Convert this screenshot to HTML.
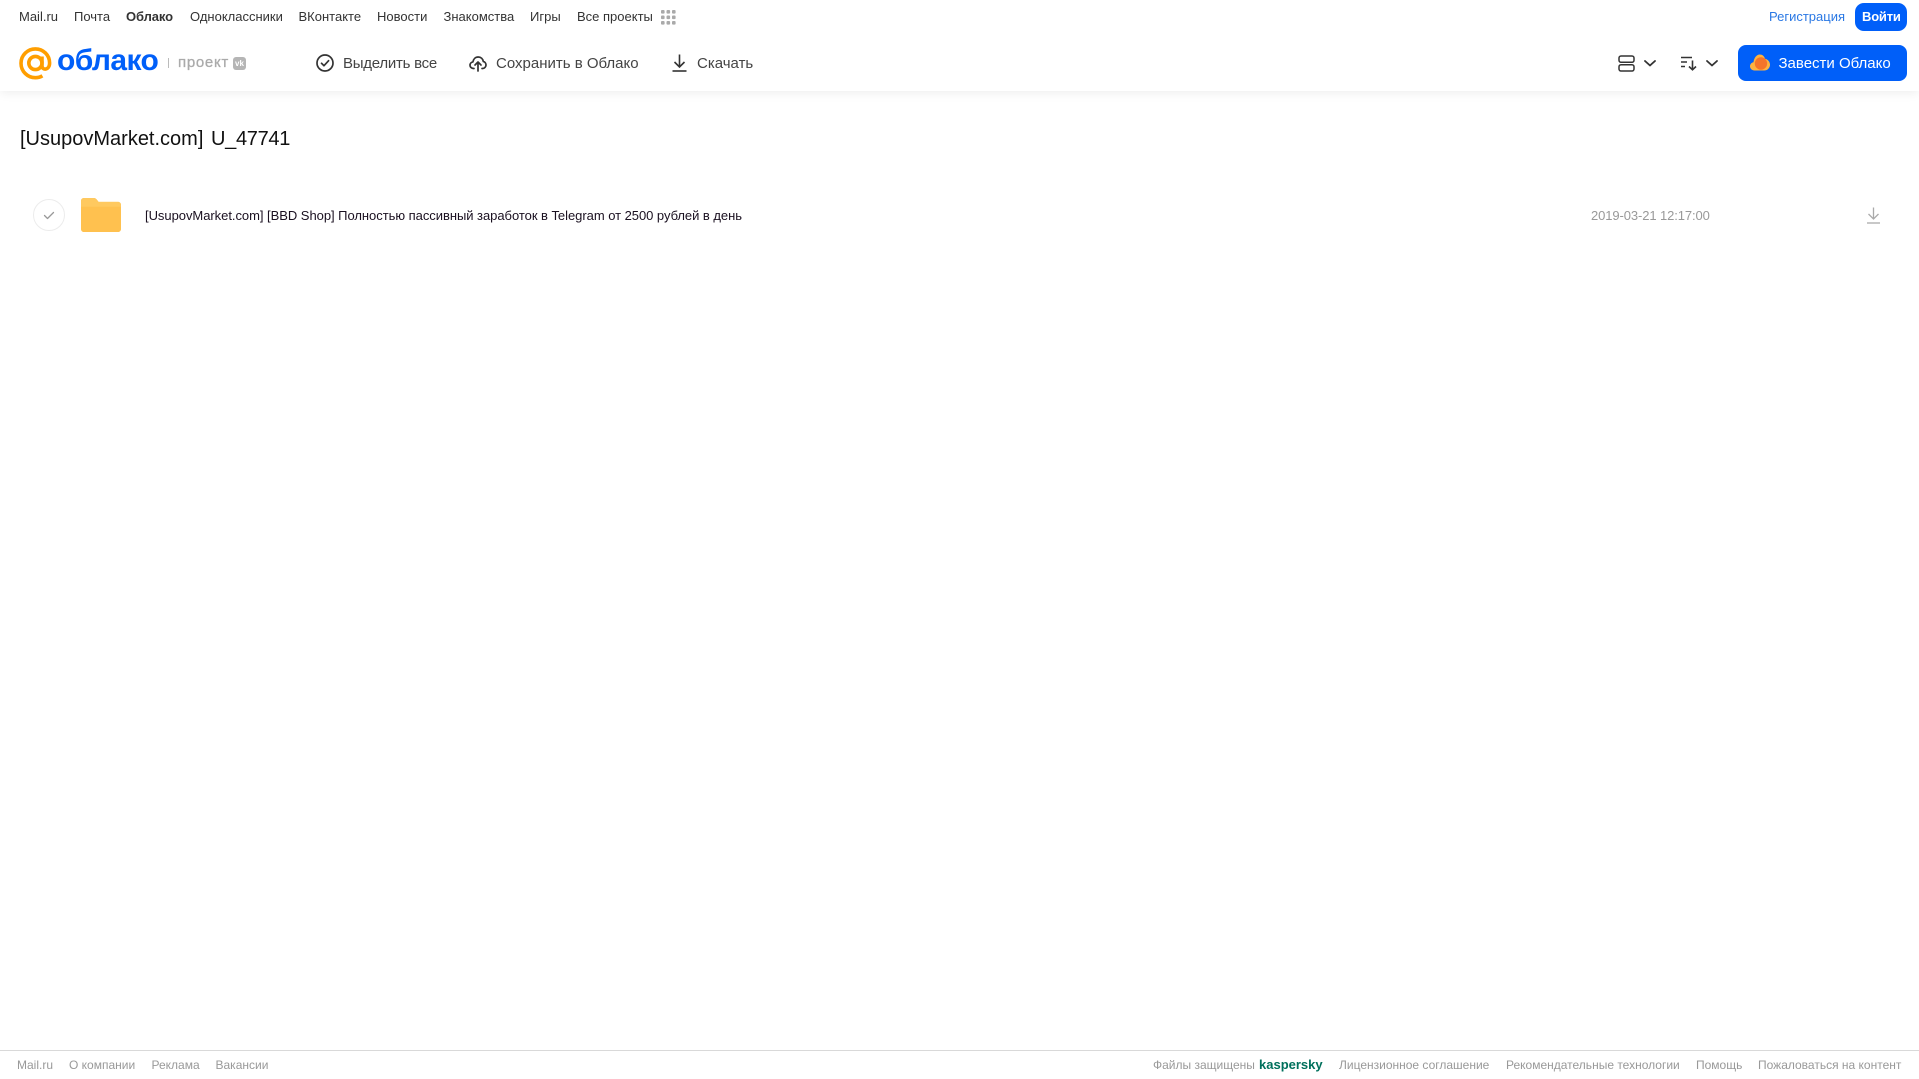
<!DOCTYPE html>
<html lang="ru">
<head>
<meta charset="utf-8">
<title>[UsupovMarket.com] U_47741</title>
<style>
html,body{margin:0;padding:0;background:#fff}
body{width:1919px;height:1079px;position:relative;overflow:hidden;font-family:"Liberation Sans","DejaVu Sans",sans-serif}
.t{position:absolute;white-space:nowrap;line-height:20px}
.n{top:7px;font-size:13px;color:#333}
.b{top:54px;font-size:15px;color:#444}
.f{top:1055px;font-size:12px;color:#999}
svg{position:absolute;overflow:visible}
</style>
</head>
<body>
<div style="position:absolute;left:0;top:0;width:1919px;height:91px;background:#fff;box-shadow:0 2px 10px rgba(0,0,0,.07)"></div>

<span class="t n" style="left:19px">Mail.ru</span>
<span class="t n" style="left:74px">Почта</span>
<span class="t n" style="left:126px;font-weight:bold;letter-spacing:-.1px">Облако</span>
<span class="t n" style="left:190px">Одноклассники</span>
<span class="t n" style="left:298.500px">ВКонтакте</span>
<span class="t n" style="left:377px">Новости</span>
<span class="t n" style="left:443.500px">Знакомства</span>
<span class="t n" style="left:530px">Игры</span>
<span class="t n" style="left:577px">Все проекты</span>
<svg style="left:661px;top:10px" width="15" height="15" fill="#aaa">
<rect x="0" y="0" width="3.6" height="3.6" rx="1"/><rect x="5.5" y="0" width="3.6" height="3.6" rx="1"/><rect x="11" y="0" width="3.6" height="3.6" rx="1"/>
<rect x="0" y="5.5" width="3.6" height="3.6" rx="1"/><rect x="5.5" y="5.5" width="3.6" height="3.6" rx="1"/><rect x="11" y="5.5" width="3.6" height="3.6" rx="1"/>
<rect x="0" y="11" width="3.6" height="3.6" rx="1"/><rect x="5.5" y="11" width="3.6" height="3.6" rx="1"/><rect x="11" y="11" width="3.6" height="3.6" rx="1"/>
</svg>

<span class="t n" style="left:1769px;color:#2a78e4">Регистрация</span>
<div style="position:absolute;left:1855px;top:3px;width:52px;height:28px;background:#005ff9;border-radius:9px"></div>
<span class="t n" style="left:1862px;color:#fff;font-weight:bold;letter-spacing:-.2px">Войти</span>

<!-- Logo -->
<svg style="left:19px;top:47px" width="33" height="33" viewBox="0 0 33 33" fill="none" stroke="#ff9e00" stroke-width="3.6">
<circle cx="16.4" cy="16" r="6.6"/>
<path d="M23 9.5v9.2c0 5.2 7.6 4.6 7.6-2.7C30.600 8 24.200 1.900 16.400 1.900 8.600 1.900 2 8.200 2 16.200 2 24.500 8.600 30.700 16.400 30.700c2.700 0 5-.7 7-1.900"/>
</svg>
<span class="t" style="left:57px;top:45px;font-size:30px;line-height:32px;font-weight:bold;color:#005ff9;letter-spacing:-.6px">облако</span>
<div style="position:absolute;left:168px;top:58px;width:1px;height:10px;background:#bbb"></div>
<span class="t" style="left:178px;top:53px;font-size:15px;color:#aaa;letter-spacing:.7px;-webkit-text-stroke:.3px #aaa">проект</span>
<div style="position:absolute;left:233px;top:57px;width:13px;height:13px;background:#b5b5b5;border-radius:3px"></div>
<span class="t" style="left:235px;top:58px;font-size:8px;line-height:11px;font-weight:bold;color:#fff">vk</span>

<!-- Toolbar -->
<svg style="left:316px;top:54px" width="18" height="18" viewBox="0 0 18 18" fill="none" stroke="#333" stroke-width="1.700">
<circle cx="9" cy="9" r="8"/><path d="M5.500 9.300l2.500 2.400 4.600-5" stroke-linecap="round" stroke-linejoin="round"/>
</svg>
<span class="t b" style="left:343px;letter-spacing:-.25px">Выделить все</span>

<svg style="left:469px;top:54px" width="18" height="18" viewBox="0 0 18 18" fill="none" stroke="#333" stroke-width="1.700" stroke-linecap="round" stroke-linejoin="round">
<path d="M5 14.500H4.500C2.500 14.500 1 13 1 11.200c0-1.700 1.200-3 2.900-3.300C4.400 5 6.500 3 9.200 3c2.700 0 4.700 1.900 5.100 4.500 1.600.3 2.700 1.800 2.700 3.500 0 1.900-1.500 3.500-3.500 3.500H13"/>
<path d="M9 17V8.500M6 11l3-3 3 3"/>
</svg>
<span class="t b" style="left:496px">Сохранить в Облако</span>

<svg style="left:672px;top:54px" width="15" height="18" viewBox="0 0 15 18" fill="none" stroke="#333" stroke-width="1.600">
<path d="M7.500 0.500V12.500M2.500 8l5 5 5-5"/><path d="M0.500 17H14.500"/>
</svg>
<span class="t b" style="left:697px">Скачать</span>

<svg style="left:1618px;top:55px" width="17" height="17" viewBox="0 0 17 17" fill="none" stroke="#333" stroke-width="1.500">
<rect x="1" y="1" width="15" height="6.300" rx="2"/><rect x="1" y="9.700" width="15" height="6.300" rx="2"/>
</svg>
<svg style="left:1644px;top:60px" width="12" height="7" viewBox="0 0 12 7" fill="none" stroke="#333" stroke-width="1.800" stroke-linecap="round" stroke-linejoin="round"><path d="M1 1l5 4.500L11 1"/></svg>
<svg style="left:1681px;top:56px" width="16" height="15" viewBox="0 0 16 15" fill="none" stroke="#333" stroke-width="1.400">
<path d="M0 1.500H11M0 6H6M0 10.500H4"/><path d="M11.500 4.500V13.500M8 10.500l3.500 3.300 3.500-3.300" stroke-width="1.600"/>
</svg>
<svg style="left:1706px;top:60px" width="12" height="7" viewBox="0 0 12 7" fill="none" stroke="#333" stroke-width="1.800" stroke-linecap="round" stroke-linejoin="round"><path d="M1 1l5 4.500L11 1"/></svg>

<div style="position:absolute;left:1738px;top:45px;width:169px;height:36px;background:#005ff9;border-radius:8px"></div>
<svg style="left:1750px;top:54px" width="20" height="17" viewBox="0 0 20 17">
<path d="M4.500 16.500C2 16.500 0 14.600 0 12.300 0 10.200 1.500 8.500 3.500 8.200 4 4 6.500 .5 9.800 .5c2.500 0 4.500 1.700 5.200 4.200C17.800 5.200 20 7.700 20 10.700c0 3.300-2.700 5.800-5.800 5.800z" fill="#ffb23f"/>
<circle cx="11" cy="9.500" r="6.200" fill="#f5742a"/>
</svg>
<span class="t" style="left:1778.500px;top:54px;font-size:15px;color:#fff">Завести Облако</span>

<!-- Title -->
<span class="t" style="left:20px;top:127px;font-size:20px;line-height:24px;color:#111">[UsupovMarket.com]</span>
<span class="t" style="left:211px;top:127px;font-size:20px;line-height:24px;color:#111;letter-spacing:-.3px">U_47741</span>

<!-- Row -->
<div style="position:absolute;left:33px;top:199px;width:30px;height:30px;border:1px solid #ececec;border-radius:50%"></div>
<svg style="left:43px;top:211px" width="12" height="9" viewBox="0 0 12 9" fill="none" stroke="#999" stroke-width="1.300" stroke-linecap="round" stroke-linejoin="round"><path d="M1.500 4.500l3 3 6-6"/></svg>
<svg style="left:81px;top:198px" width="40" height="34" viewBox="0 0 41 35" preserveAspectRatio="none">
<path d="M0 3C0 1.300 1.300 0 3 0h10c1.500 0 2.500.7 3.500 2l1.500 2h20c1.600 0 3 1.300 3 3v25c0 1.700-1.400 3-3 3H3c-1.700 0-3-1.300-3-3z" fill="#ffc14f"/>
<path d="M0 9h41v-2c0-1.700-1.400-3-3-3H18l-1.500-2C15.500.7 14.500 0 13 0H3C1.300 0 0 1.300 0 3z" fill="#ffc95f"/>
</svg>
<span class="t" style="left:145px;top:206px;font-size:13px;color:#1a1020;letter-spacing:-.04px">[UsupovMarket.com] [BBD Shop] Полностью пассивный заработок в Telegram от 2500 рублей в день</span>
<span class="t" style="left:1591px;top:206px;font-size:13px;color:#999;letter-spacing:-.1px">2019-03-21 12:17:00</span>
<svg style="left:1867px;top:207px" width="13" height="17" viewBox="0 0 13 17" fill="none" stroke="#aaa" stroke-width="1.300">
<path d="M6.500 0.500V12M1.500 7l5 5 5-5"/><path d="M0 16H13"/>
</svg>

<!-- Footer -->
<div style="position:absolute;left:0;top:1050px;width:1919px;height:1px;background:#d9d9d9"></div>
<span class="t f" style="left:17px">Mail.ru</span>
<span class="t f" style="left:69px">О компании</span>
<span class="t f" style="left:151.500px">Реклама</span>
<span class="t f" style="left:215.500px">Вакансии</span>
<span class="t f" style="left:1153px">Файлы защищены</span>
<span class="t f" style="left:1259px;font-weight:bold;font-size:13px;color:#00705c">kaspersky</span>
<span class="t f" style="left:1339px">Лицензионное соглашение</span>
<span class="t f" style="left:1506px">Рекомендательные технологии</span>
<span class="t f" style="left:1696px">Помощь</span>
<span class="t f" style="left:1758px">Пожаловаться на контент</span>
</body>
</html>
